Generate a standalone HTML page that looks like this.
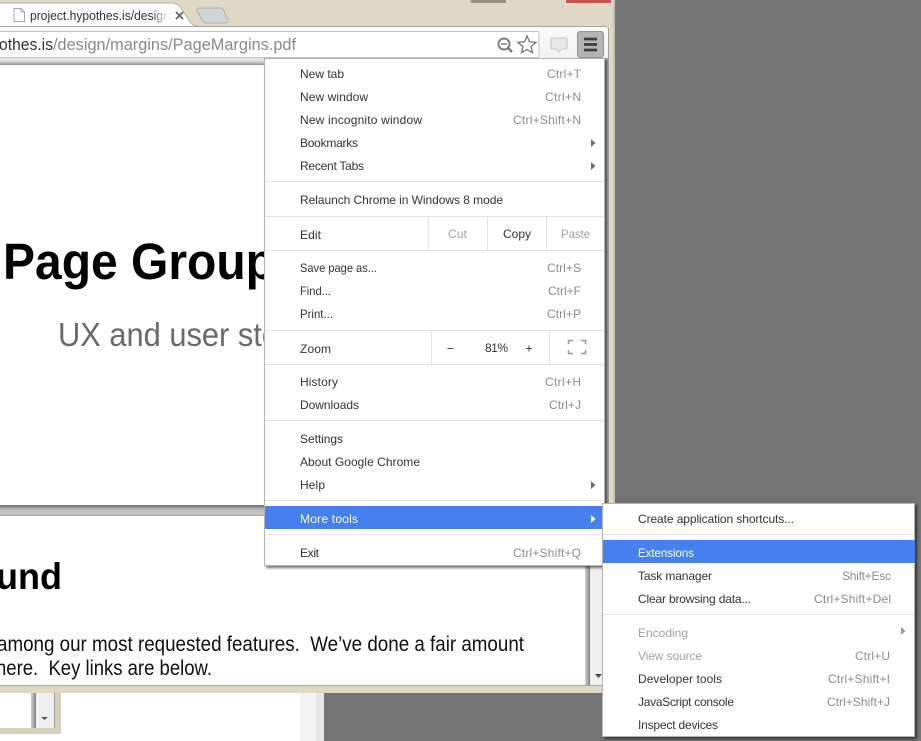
<!DOCTYPE html>
<html><head><meta charset="utf-8"><style>
html,body{margin:0;padding:0;width:921px;height:741px;overflow:hidden;background:#747474}
svg{display:block;position:absolute;left:0;top:0}
text{font-family:"Liberation Sans",sans-serif;white-space:pre}
.m text{font-size:12px;fill:#333}
.m .s{fill:#8d8d8d}
.m .d{fill:#a3a3a3}
.m .w{fill:#fff}
</style></head><body>
<svg width="921" height="741" viewBox="0 0 921 741" xmlns="http://www.w3.org/2000/svg">
<defs>
<linearGradient id="sp" x1="0" y1="0" x2="0" y2="1"><stop offset="0" stop-color="#6f6f6f"/><stop offset=".45" stop-color="#bdbdbd"/><stop offset=".8" stop-color="#c6c6c6"/><stop offset="1" stop-color="#a8a8a8"/></linearGradient>
<linearGradient id="spv" x1="0" y1="0" x2="1" y2="0"><stop offset="0" stop-color="#c8c8c8"/><stop offset=".6" stop-color="#aaa"/><stop offset="1" stop-color="#777"/></linearGradient>
<linearGradient id="tb" x1="0" y1="0" x2="0" y2="1"><stop offset="0" stop-color="#fbfbfb"/><stop offset="1" stop-color="#f1f1f1"/></linearGradient>
<linearGradient id="top" x1="0" y1="0" x2="0" y2="1"><stop offset="0" stop-color="#e8e8e8"/><stop offset=".5" stop-color="#d8d8d8"/><stop offset="1" stop-color="#8f8f8f"/></linearGradient>
<linearGradient id="fade" x1="0" y1="0" x2="1" y2="0"><stop offset="0" stop-color="#fff" stop-opacity="0"/><stop offset="1" stop-color="#fff"/></linearGradient>
<filter id="sh" x="-5%" y="-5%" width="110%" height="110%"><feDropShadow dx="2" dy="2" stdDeviation="1.2" flood-color="#000" flood-opacity=".55"/></filter>
</defs>

<!-- window frame -->
<rect x="0" y="0" width="615" height="693" fill="#ded8c4"/>
<rect x="471" y="0" width="35" height="3" fill="#9b917f"/>
<rect x="566" y="0" width="45" height="3" fill="#cc5252"/>
<rect x="613" y="0" width="2" height="693" fill="#c9c4b2"/>

<!-- tabs -->
<path d="M200 8 H220 Q223 8 224 11 L228 20 Q228.500 23 225 23 H206 Q203 23 202 20 L197 11 Q196.500 8 200 8Z" fill="#cfd5d5" stroke="#b4b3a6"/>
<path d="M-4 27 V3 H172 Q178 3 181 8 L190 22 Q193 26 197 26 V27Z" fill="#fdfdfd" stroke="#b5b4a8"/>
<path d="M14 8.500 H21 L24.500 12 V21.500 H14Z M21 8.500 V12 H24.500" fill="#fff" stroke="#a8a8a8"/>
<text x="30" y="20" font-size="13" fill="#333" textLength="137" lengthAdjust="spacingAndGlyphs">project.hypothes.is/desigr</text>
<rect x="152" y="6" width="16" height="18" fill="url(#fade)"/>
<path d="M176 12 L183 19 M183 12 L176 19" stroke="#666" stroke-width="1.800"/>

<!-- toolbar -->
<path d="M-2 27 H605 Q608 27 608 30 V62 H-2Z" fill="url(#tb)"/>
<rect x="0" y="26" width="607" height="1" fill="#a6a59b"/>
<rect x="608" y="28" width="1" height="477" fill="#a3a29a"/>
<rect x="-2" y="31.500" width="541" height="26" rx="2" fill="#fff" stroke="#c4c4c4"/>
<text x="-1" y="50" font-size="17" fill="#333" textLength="54" lengthAdjust="spacingAndGlyphs">othes.is</text>
<text x="53" y="50" font-size="17" fill="#8a8a8a" textLength="243" lengthAdjust="spacingAndGlyphs">/design/margins/PageMargins.pdf</text>
<circle cx="504" cy="44" r="5.500" fill="none" stroke="#808080" stroke-width="2"/>
<path d="M501 44 H507" stroke="#808080" stroke-width="1.500"/>
<path d="M508 48 L512 52" stroke="#808080" stroke-width="2.500"/>
<path d="M527 36 L529.500 41.800 L536 42.400 L531 46.600 L532.600 52.800 L527 49.500 L521.400 52.800 L523 46.600 L518 42.400 L524.500 41.800Z" fill="#fff" stroke="#777" stroke-width="1.300"/>
<path d="M552 38 H566 Q567 38 567 39 V48 Q567 49 566 49 H562 L559 52 L556 49 H552 Q551 49 551 48 V39 Q551 38 552 38Z" fill="#e8e8e8" stroke="#d4d4d4" stroke-width="1.500"/>
<rect x="577.500" y="31.500" width="26" height="26" rx="2.500" fill="#b4b4b4" stroke="#959595"/>
<path d="M584 39 H597 M584 44.500 H597 M584 50 H597" stroke="#3e3e3e" stroke-width="2.800"/>

<!-- content -->
<rect x="0" y="58" width="604" height="7" fill="url(#top)"/>
<rect x="0" y="65" width="604" height="440" fill="#fff"/>
<rect x="604" y="58" width="5" height="447" fill="#a8a8a8"/>
<text x="3" y="279" font-size="51" font-weight="bold" fill="#000" textLength="272" lengthAdjust="spacingAndGlyphs">Page Group</text>
<text x="58" y="346" font-size="33" fill="#6a6a6a" textLength="221" lengthAdjust="spacingAndGlyphs">UX and user sto</text>

<rect x="0" y="505" width="604" height="11" fill="url(#sp)"/>
<rect x="0" y="516" width="585" height="170" fill="#fff"/>
<rect x="585" y="516" width="5" height="170" fill="url(#spv)"/>
<rect x="590" y="516" width="14" height="170" fill="#f0f0f0"/>
<path d="M595 674 H602 L598.500 678Z" fill="#444"/>
<text x="-4" y="589" font-size="37" font-weight="bold" fill="#000" textLength="66" lengthAdjust="spacingAndGlyphs">und</text>
<text x="-3" y="651" font-size="21" fill="#111" textLength="527" lengthAdjust="spacingAndGlyphs">among our most requested features.  We’ve done a fair amount</text>
<text x="-4" y="675" font-size="21" fill="#111" textLength="216" lengthAdjust="spacingAndGlyphs">here.  Key links are below.</text>
<rect x="0" y="685" width="615" height="1" fill="#aaa99d"/>
<rect x="0" y="686" width="615" height="7" fill="#ded8c4"/>

<!-- lower pane -->
<rect x="0" y="693" width="324" height="48" fill="#fff"/>
<rect x="300" y="693" width="16" height="48" fill="#f4f4f4"/>
<rect x="316" y="693" width="8" height="48" fill="#e6e6e6"/>
<rect x="0" y="693" width="61" height="41" fill="#d6d1bd"/>
<rect x="0" y="693" width="54" height="35" fill="#fff"/>
<rect x="31" y="693" width="5" height="35" fill="url(#spv)"/>
<rect x="36" y="693" width="18" height="35" fill="#f0f0f0"/>
<rect x="54" y="693" width="1" height="35" fill="#999"/>
<path d="M41 717 H48 L44.500 720Z" fill="#555"/>

<!-- main menu -->
<g class="m">
<rect x="264.500" y="58.500" width="340" height="507" fill="#fff" stroke="#b4b4b4" filter="url(#sh)"/>
<rect x="265" y="506" width="339" height="23" fill="#4580ee"/>
<g fill="#e4e4e4">
<rect x="265" y="181" width="339" height="1"/>
<rect x="265" y="216" width="339" height="1"/>
<rect x="265" y="250" width="339" height="1"/>
<rect x="265" y="330" width="339" height="1"/>
<rect x="265" y="364" width="339" height="1"/>
<rect x="265" y="420" width="339" height="1"/>
<rect x="265" y="500" width="339" height="1"/>
<rect x="265" y="534" width="339" height="1"/>
<rect x="428" y="217" width="1" height="33"/>
<rect x="487" y="217" width="1" height="33"/>
<rect x="546" y="217" width="1" height="33"/>
<rect x="431" y="331" width="1" height="33"/>
<rect x="549" y="331" width="1" height="33"/>
</g>
<text x="300" y="78" textLength="44">New tab</text><text class="s" x="547" y="78" textLength="34">Ctrl+T</text>
<text x="300" y="101" textLength="68">New window</text><text class="s" x="545" y="101" textLength="36">Ctrl+N</text>
<text x="300" y="124" textLength="122">New incognito window</text><text class="s" x="513" y="124" textLength="68">Ctrl+Shift+N</text>
<text x="300" y="147" textLength="58">Bookmarks</text>
<text x="300" y="170" textLength="64">Recent Tabs</text>
<text x="300" y="204" textLength="203">Relaunch Chrome in Windows 8 mode</text>
<text x="300" y="239" textLength="21">Edit</text>
<text class="d" x="448" y="238" textLength="19">Cut</text>
<text x="503" y="238" textLength="28">Copy</text>
<text class="d" x="561" y="238" textLength="29" lengthAdjust="spacingAndGlyphs">Paste</text>
<text x="300" y="272" textLength="77" lengthAdjust="spacingAndGlyphs">Save page as...</text><text class="s" x="547" y="272" textLength="34">Ctrl+S</text>
<text x="300" y="295" textLength="31" lengthAdjust="spacingAndGlyphs">Find...</text><text class="s" x="548" y="295" textLength="33">Ctrl+F</text>
<text x="300" y="318" textLength="33" lengthAdjust="spacingAndGlyphs">Print...</text><text class="s" x="547" y="318" textLength="34">Ctrl+P</text>
<text x="300" y="353" textLength="31">Zoom</text>
<path d="M447.500 348.500 H453 M526 348.500 H532 M529 345.500 V351.500" stroke="#444" stroke-width="1"/>
<text x="485" y="352" textLength="23">81%</text>
<path d="M568.500 344 V340.500 H573 M581 340.500 H585.500 V344 M568.500 350 V353.500 H573 M581 353.500 H585.500 V350" fill="none" stroke="#999" stroke-width="1.500"/>
<text x="300" y="386" textLength="38">History</text><text class="s" x="545" y="386" textLength="36">Ctrl+H</text>
<text x="300" y="409" textLength="59">Downloads</text><text class="s" x="549" y="409" textLength="32">Ctrl+J</text>
<text x="300" y="443" textLength="43">Settings</text>
<text x="300" y="466" textLength="120">About Google Chrome</text>
<text x="300" y="489" textLength="25">Help</text>
<text class="w" x="300" y="523" textLength="58">More tools</text>
<text x="300" y="557" textLength="19">Exit</text><text class="s" x="513" y="557" textLength="68">Ctrl+Shift+Q</text>
<path d="M591 139 L595.500 143 L591 147Z M591 162 L595.500 166 L591 170Z M591 481 L595.500 485 L591 489Z" fill="#6f6f6f"/>
<path d="M591 515 L595.500 519 L591 523Z" fill="#fff"/>
</g>

<!-- submenu -->
<g class="m">
<rect x="602.500" y="503.500" width="312" height="233" fill="#fff" stroke="#b4b4b4" filter="url(#sh)"/>
<rect x="603" y="540" width="312" height="23" fill="#4580ee"/>
<rect x="603" y="534" width="311" height="1" fill="#e4e4e4"/>
<rect x="603" y="614" width="311" height="1" fill="#e4e4e4"/>
<text x="638" y="523" textLength="156">Create application shortcuts...</text>
<text class="w" x="638" y="557" textLength="56" lengthAdjust="spacingAndGlyphs">Extensions</text>
<text x="638" y="580" textLength="74">Task manager</text><text class="s" x="842" y="580" textLength="49">Shift+Esc</text>
<text x="638" y="603" textLength="113">Clear browsing data...</text><text class="s" x="814" y="603" textLength="77">Ctrl+Shift+Del</text>
<text class="d" x="638" y="637" textLength="50">Encoding</text>
<text class="d" x="638" y="660" textLength="64">View source</text><text class="s" x="855" y="660" textLength="35">Ctrl+U</text>
<text x="638" y="683" textLength="84">Developer tools</text><text class="s" x="828" y="683" textLength="62">Ctrl+Shift+I</text>
<text x="638" y="706" textLength="96">JavaScript console</text><text class="s" x="827" y="706" textLength="63">Ctrl+Shift+J</text>
<text x="638" y="729" textLength="80">Inspect devices</text>
<path d="M901 627 L905.500 631 L901 635Z" fill="#9a9a9a"/>
</g>
</svg>
</body></html>
